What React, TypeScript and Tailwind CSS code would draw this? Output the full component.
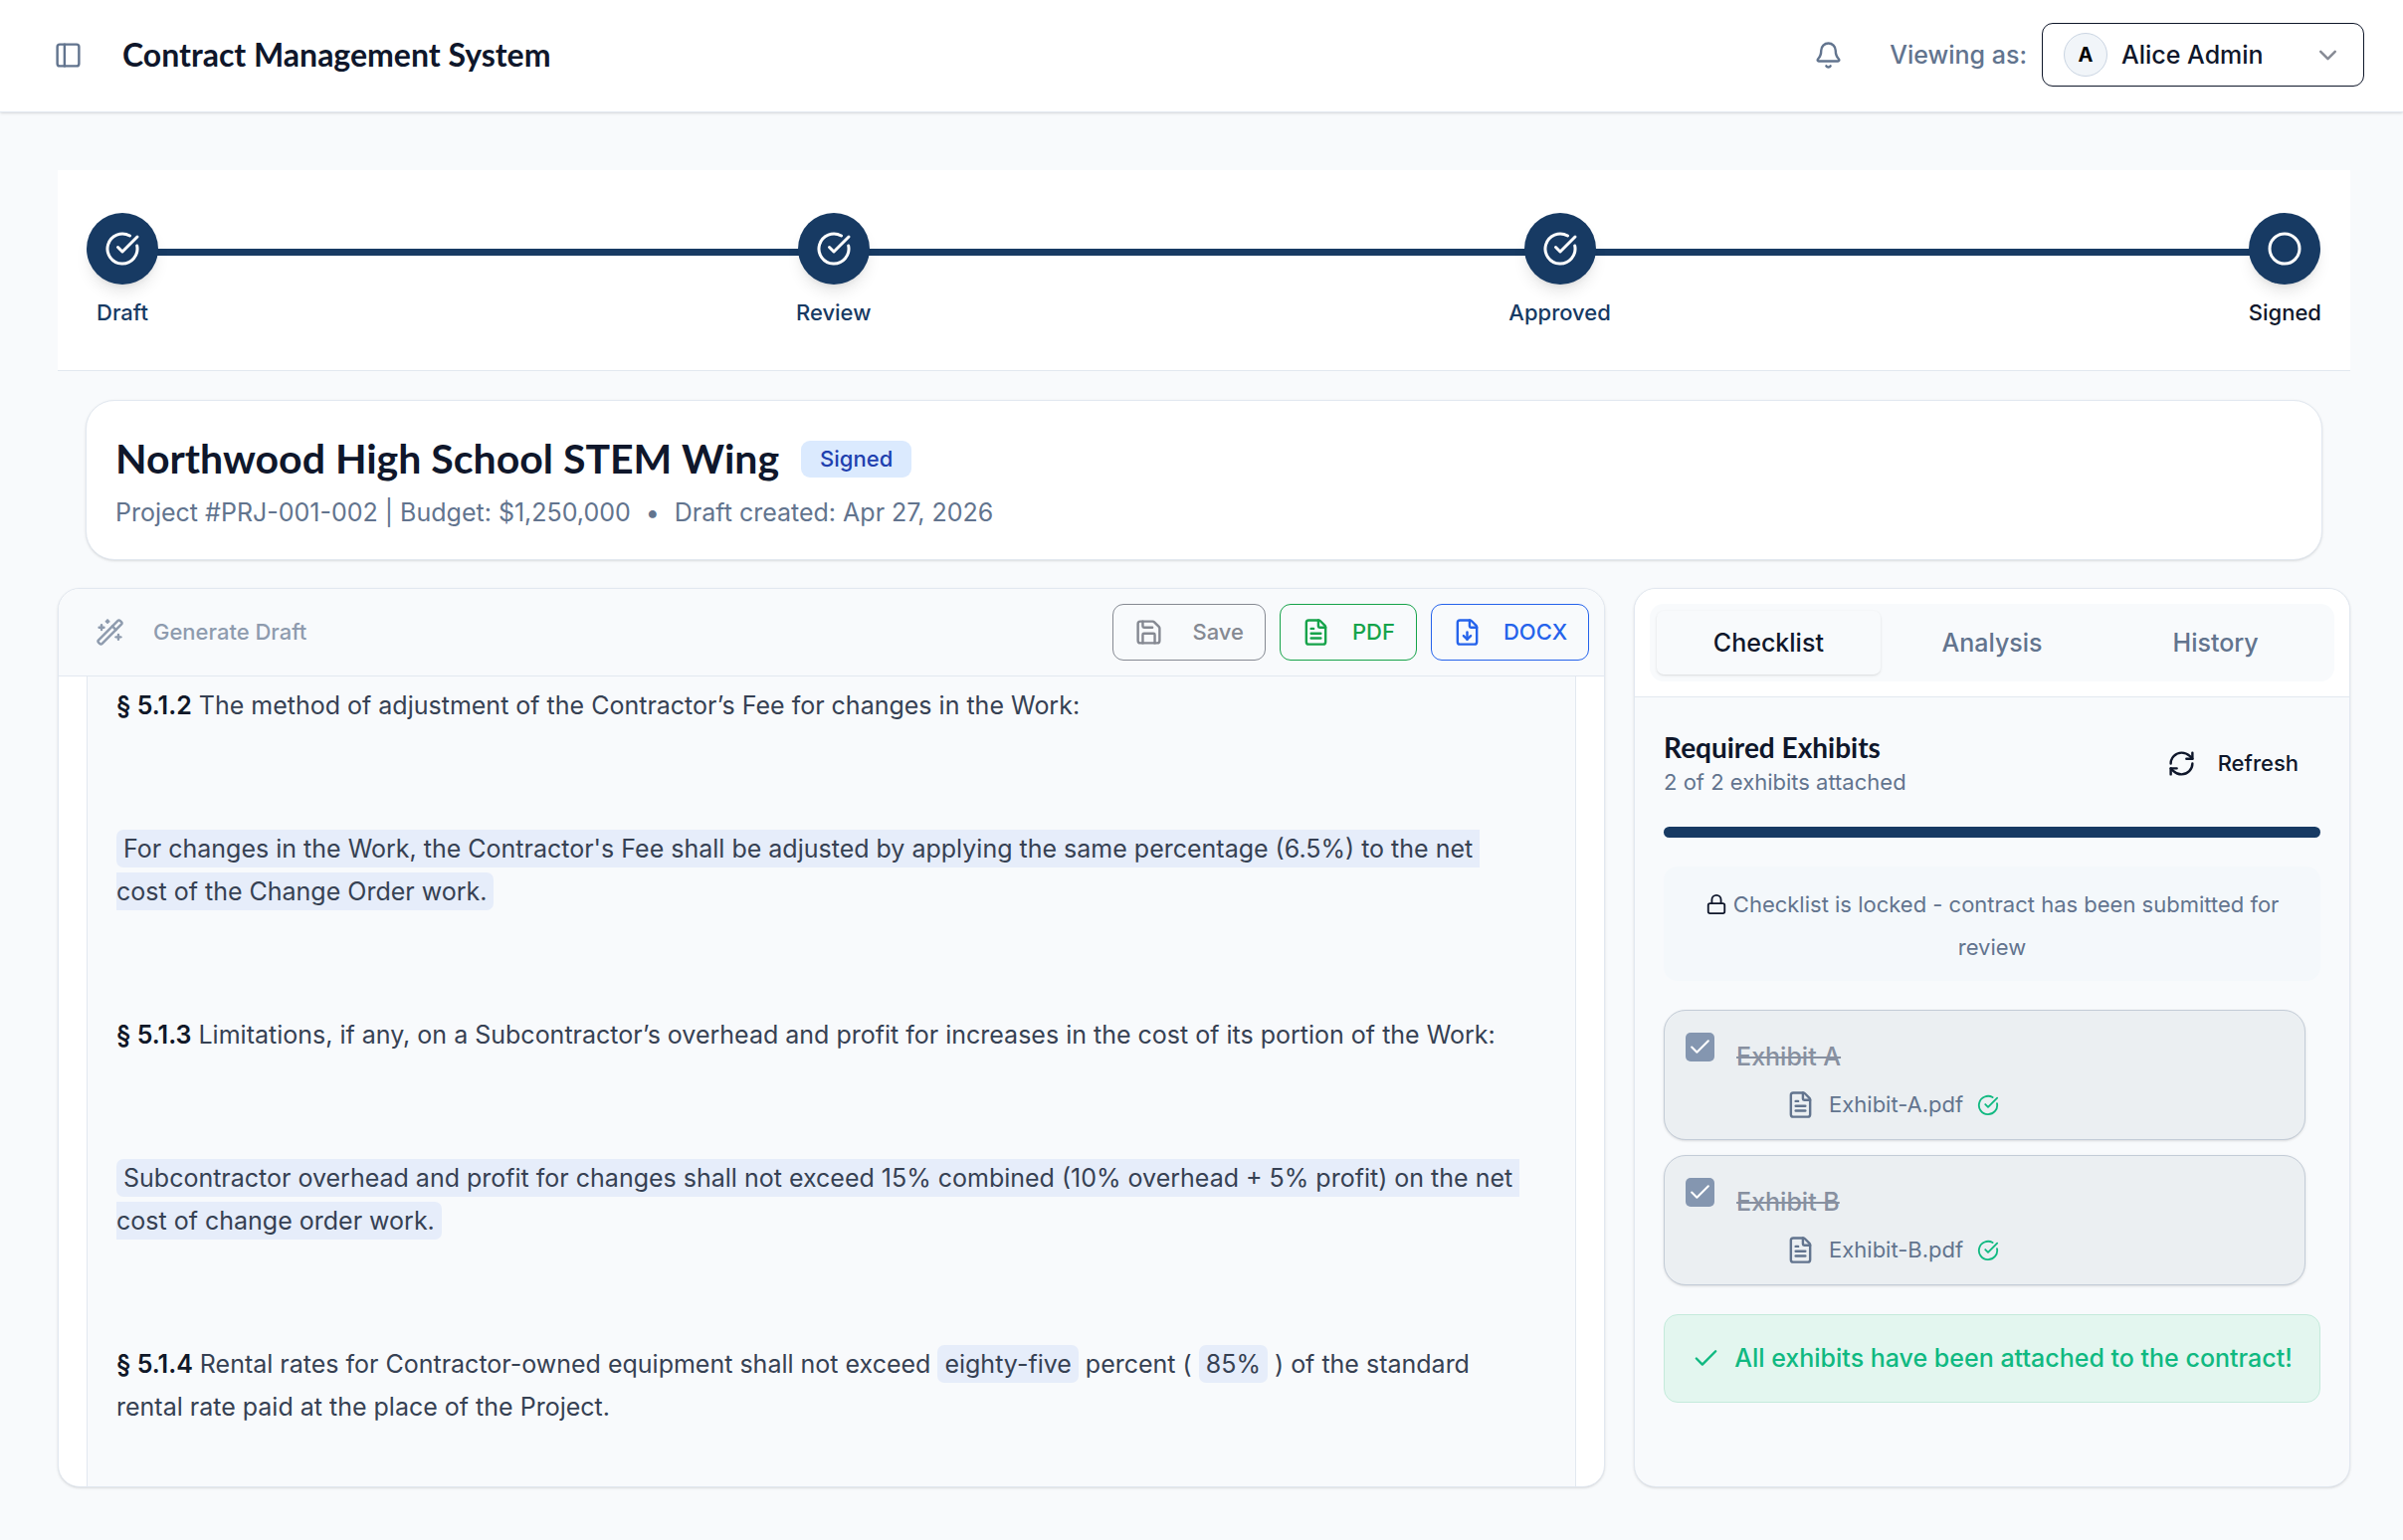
import React from 'react';
import {
  Bell,
  Check,
  ChevronDown,
  Circle,
  CircleCheckBig,
  FileDown,
  FileText,
  Lock,
  PanelLeft,
  RefreshCw,
  Save,
  WandSparkles,
} from 'lucide-react';

const steps = [
  { label: 'Draft', done: true },
  { label: 'Review', done: true },
  { label: 'Approved', done: true },
  { label: 'Signed', done: false },
];

const tabs = ['Checklist', 'Analysis', 'History'];

const exhibits = [
  { id: 'a', name: 'Exhibit A', file: 'Exhibit-A.pdf' },
  { id: 'b', name: 'Exhibit B', file: 'Exhibit-B.pdf' },
];

const Header: React.FC = () => (
  <header className="flex items-center justify-between h-[113px] px-[39px] pb-[2px] bg-white border-b border-slate-200 shadow-sm">
    <div className="flex items-center gap-[25px]">
      <button aria-label="Toggle sidebar" className="p-[15px] text-slate-500">
        <PanelLeft size={29} />
      </button>
      <h1 className="font-['Lato',sans-serif] text-[32px] leading-[40px] font-bold">Contract Management System</h1>
    </div>
    <div className="flex items-center">
      <button aria-label="Notifications" className="p-[14px] mr-[33px] text-slate-500">
        <Bell size={29} />
      </button>
      <label htmlFor="viewer" className="mr-[15px] font-medium text-slate-500">Viewing as:</label>
      <div className="flex items-center w-[324px] h-16 px-[21px] border border-[#0f172a] rounded-[11px]">
        <span className="flex items-center justify-center w-11 h-11 shrink-0 rounded-full bg-slate-100 border border-slate-300 text-[20px] leading-none font-bold text-black">
          A
        </span>
        <select id="viewer" className="appearance-none flex-1 min-w-0 pl-[14px] bg-transparent font-medium text-slate-900">
          <option>Alice Admin</option>
        </select>
        <ChevronDown size={29} className="shrink-0 text-slate-900 opacity-50" />
      </div>
    </div>
  </header>
);

const Stepper: React.FC = () => (
  <section className="bg-white border-b border-slate-200 px-[29px] py-[43px]">
    <ol className="relative flex justify-between">
      {/* connector behind the circles */}
      <li aria-hidden="true" className="absolute left-9 right-9 top-9 h-[7px] bg-[#173a63]" />
      {steps.map((step) => (
        <li key={step.label} className="relative flex flex-col items-center">
          <span className="flex items-center justify-center w-[72px] h-[72px] rounded-full bg-[#173a63] text-white shadow-lg">
            {step.done ? <CircleCheckBig size={36} /> : <Circle size={36} />}
          </span>
          <span className={`mt-[14px] text-[22px] leading-[29px] font-medium ${step.done ? 'text-[#173a63]' : 'text-slate-900'}`}>
            {step.label}
          </span>
        </li>
      ))}
    </ol>
  </section>
);

const ContractCard: React.FC = () => (
  <section className="mx-[28px] mt-[29px] mb-[28px] p-[29px] bg-white border border-slate-200 rounded-[29px] shadow-sm">
    <div className="flex items-center gap-[22px] h-[58px]">
      <h2 className="font-['Lato',sans-serif] text-[41px] leading-[58px] font-bold">Northwood High School STEM Wing</h2>
      <span className="px-[19px] py-[4px] rounded-[9px] bg-[#dbeafe] text-[#1e40af] text-[22px] leading-[29px] font-medium">
        Signed
      </span>
    </div>
    <p className="mt-[7px] leading-[36px] text-slate-500">
      Project #PRJ-001-002 | Budget: $1,250,000<span className="mx-[15px]">•</span>Draft created: Apr 27, 2026
    </p>
  </section>
);

const Filled: React.FC<{ children: React.ReactNode }> = ({ children }) => (
  <span className="px-[7px] py-[4px] rounded-[7px] bg-[#e6edfa]">{children}</span>
);

const Editor: React.FC = () => (
  <section className="flex flex-col bg-white border border-slate-200 rounded-[22px] shadow-sm overflow-hidden">
    <div className="flex items-center justify-between px-[15px] py-[15px] bg-slate-50 border-b border-slate-200 text-[22px] leading-[29px] font-medium">
      <button disabled className="flex items-center gap-[29px] px-[22px] text-slate-500 opacity-70">
        <WandSparkles size={29} />
        Generate Draft
      </button>
      <div className="flex gap-[14px]">
        <button disabled className="flex items-center gap-[29px] h-[57px] px-[21px] border border-[#858992] rounded-[11px] text-[#858992]">
          <Save size={29} />
          Save
        </button>
        <button className="flex items-center gap-[22px] h-[57px] px-[21px] border border-[#16a34a] rounded-[11px] text-[#16a34a]">
          <FileText size={29} />
          PDF
        </button>
        <button className="flex items-center gap-[22px] h-[57px] px-[21px] border border-[#2563eb] rounded-[11px] text-[#2563eb]">
          <FileDown size={29} />
          DOCX
        </button>
      </div>
    </div>
    <article className="flex-1 flex flex-col gap-[101px] mx-[28px] pt-[8px] pl-[29px] pr-[50px] bg-slate-50 border-x border-slate-200 leading-[43px] whitespace-pre-wrap text-gray-700">
      <p>
        <strong className="font-semibold text-gray-900">§ 5.1.2</strong> The method of adjustment of the Contractor’s Fee for changes in the Work:
      </p>
      <p>
        <Filled>
          For changes in the Work, the Contractor's Fee shall be adjusted by applying the same percentage (6.5%) to the net cost of the Change Order work.
        </Filled>
      </p>
      <p>
        <strong className="font-semibold text-gray-900">§ 5.1.3</strong> Limitations, if any, on a Subcontractor’s overhead and profit for increases in the cost of its portion of the Work:
      </p>
      <p>
        <Filled>
          Subcontractor overhead and profit for changes shall not exceed 15% combined (10% overhead + 5% profit) on the net cost of change order work.
        </Filled>
      </p>
      <p>
        <strong className="font-semibold text-gray-900">§ 5.1.4</strong> Rental rates for Contractor-owned equipment shall not exceed <Filled>eighty-five</Filled> percent ( <Filled>85%</Filled> ) of the standard rental rate paid at the place of the Project.
      </p>
    </article>
  </section>
);

const ExhibitItem: React.FC<{ exhibit: (typeof exhibits)[number] }> = ({ exhibit }) => (
  <li className="flex items-start gap-[22px] px-[21px] pt-[22px] pb-[20px] bg-[#ebeff2] border border-[#c3ccd7] rounded-[22px] shadow-sm">
    <span className="grid place-items-center w-[29px] h-[29px] shrink-0">
      <input
        id={`exhibit-${exhibit.id}`}
        type="checkbox"
        defaultChecked
        disabled
        className="appearance-none col-start-1 row-start-1 w-[29px] h-[29px] rounded-[5px] bg-[#8496b0]"
      />
      <Check size={25} className="col-start-1 row-start-1 text-white pointer-events-none" />
    </span>
    <div className="pt-[3px]">
      <label htmlFor={`exhibit-${exhibit.id}`} className="block leading-[43px] font-medium line-through text-[#8790a0]">
        {exhibit.name}
      </label>
      <div className="flex items-center gap-[14px] mt-[12px] ml-[50px] text-[22px] leading-[29px] text-slate-500">
        <FileText size={29} />
        {exhibit.file}
        <CircleCheckBig size={22} className="text-[#10b981]" />
      </div>
    </div>
  </li>
);

const Checklist: React.FC = () => (
  <div className="px-[29px] pt-[32px] pb-[29px]">
    <div className="flex items-center justify-between">
      <div>
        <h3 className="font-['Lato',sans-serif] text-[28px] leading-[36px] font-bold">Required Exhibits</h3>
        <p className="mt-[3px] text-[22px] leading-[29px] text-slate-500">2 of 2 exhibits attached</p>
      </div>
      <button className="flex items-center gap-[22px] px-[22px] text-[22px] leading-[29px] font-medium text-slate-900">
        <RefreshCw size={29} />
        Refresh
      </button>
    </div>
    <div role="progressbar" aria-label="Exhibits attached" aria-valuenow={2} aria-valuemax={2} className="h-[11px] mt-[30px] rounded-full bg-[#173a63]" />
    <p className="mt-[29px] px-[14px] pt-[17px] pb-[12px] rounded-[14px] bg-[#f4f8fb] text-center text-[22px] leading-[43px] text-slate-500">
      <Lock size={22} className="inline-block align-[-3px] text-slate-900" /> Checklist is locked - contract has been submitted for review
    </p>
    <ul className="flex flex-col gap-[15px] mt-[29px] mr-[15px]">
      {exhibits.map((exhibit) => (
        <ExhibitItem key={exhibit.id} exhibit={exhibit} />
      ))}
    </ul>
    <div className="flex items-center justify-center gap-[14px] mt-[29px] py-[22px] bg-[#e3f6ef] border border-[#c4eadb] rounded-[14px] leading-[43px] font-medium text-[#10b981]">
      <Check size={29} className="shrink-0" />
      All exhibits have been attached to the contract!
    </div>
  </div>
);

const SidePanel: React.FC = () => (
  <aside className="bg-slate-50 border border-slate-200 rounded-[22px] shadow-sm overflow-hidden">
    <div className="px-[15px] py-[15px] bg-white border-b border-slate-200">
      <div role="tablist" className="grid grid-cols-3 p-[7px] rounded-[14px] bg-slate-50">
        {tabs.map((tab, i) => (
          <button
            key={tab}
            role="tab"
            aria-selected={i === 0}
            className={`h-[64px] rounded-[7px] font-medium ${i === 0 ? 'text-slate-900 shadow-sm' : 'text-slate-500'}`}
          >
            {tab}
          </button>
        ))}
      </div>
    </div>
    <Checklist />
  </aside>
);

export default function App() {
  return (
    <div className="min-h-screen flex flex-col bg-slate-50 font-['Inter',sans-serif] text-[25px] leading-[36px] text-slate-900 antialiased">
      <Header />
      <main className="flex-1 flex flex-col pl-[58px] pr-[53px] pt-[58px] pb-[53px]">
        <Stepper />
        <ContractCard />
        <div className="flex-1 grid grid-cols-[minmax(0,54fr)_minmax(0,25fr)] gap-[29px]">
          <Editor />
          <SidePanel />
        </div>
      </main>
    </div>
  );
}
